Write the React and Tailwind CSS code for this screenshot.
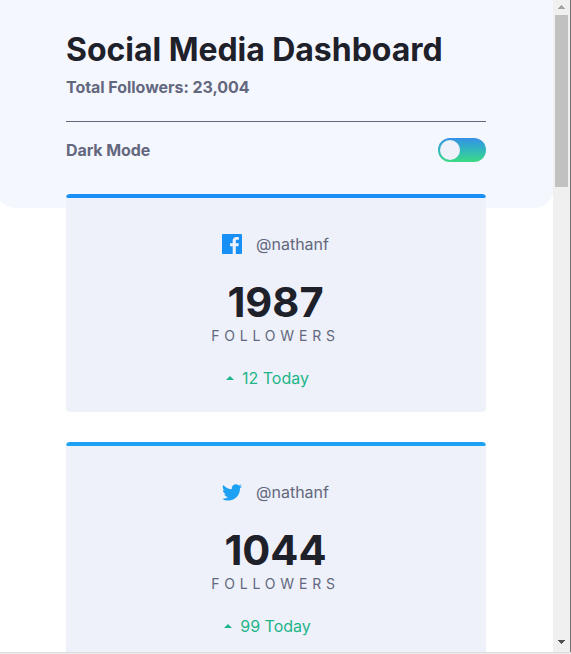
const FacebookIcon = () => (
  <svg width="20" height="20" viewBox="0 0 20 20" fill="#178FF5">
    <path d="M18.896 0H1.104C.494 0 0 .494 0 1.104v17.793C0 19.506.494 20 1.104 20h9.58v-7.745H8.076V9.237h2.606V7.01c0-2.583 1.578-3.99 3.883-3.99 1.104 0 2.052.082 2.329.119v2.7h-1.598c-1.254 0-1.496.597-1.496 1.47v1.928h2.989l-.39 3.018h-2.6V20h5.098c.608 0 1.102-.494 1.102-1.104V1.104C20 .494 19.506 0 18.896 0z" />
  </svg>
);

const TwitterIcon = () => (
  <svg width="20" height="17" viewBox="0 0 20 17" fill="#1DA1F2">
    <path d="M20 2.172a8.192 8.192 0 01-2.357.646 4.11 4.11 0 001.805-2.27 8.22 8.22 0 01-2.606.996A4.096 4.096 0 0013.847.248c-2.65 0-4.596 2.472-3.998 5.037A11.648 11.648 0 011.392.998a4.109 4.109 0 001.27 5.478 4.086 4.086 0 01-1.858-.513c-.045 1.9 1.318 3.679 3.291 4.075a4.113 4.113 0 01-1.853.07 4.106 4.106 0 003.833 2.849A8.25 8.25 0 010 14.658a11.616 11.616 0 006.29 1.843c7.618 0 11.922-6.434 11.663-12.205A8.354 8.354 0 0020 2.172z" />
  </svg>
);

function Card({ icon, bar, count, today }) {
  return (
    <section className="flex h-[218px] shrink-0 flex-col items-center overflow-hidden rounded-[4px] bg-[#eef1f9]">
      <div className={`h-1 w-full shrink-0 rounded-[4px] ${bar}`} />
      <div className="mt-[34px] flex h-6 items-center gap-[14px] pr-px text-base leading-6 text-[#63687e]">
        {icon}
        <span>@nathanf</span>
      </div>
      <div className="mt-[25px] h-[43px] pr-px text-[41.6px] leading-[42px] font-bold text-[#1e202a]">{count}</div>
      <div className="mt-[2px] h-5 pr-px text-sm leading-5 font-normal tracking-[4.8px] text-[#63687e]">FOLLOWERS</div>
      <div className="mt-[20px] flex h-6 items-center gap-2 pr-[17px] text-base leading-6 text-[#1eb589]">
        <svg width="8" height="4" viewBox="0 0 8 4" fill="#1eb589">
          <path fillRule="evenodd" d="M0 4l4-4 4 4z" />
        </svg>
        <span>{today} Today</span>
      </div>
    </section>
  );
}

function Scrollbar() {
  return (
    <div className="flex w-[18px] shrink-0 flex-col border-r border-[#707070] bg-[#f0f0f0] pl-[2px] pr-[2px]">
      <div className="flex h-[15px] justify-center pt-[5px]">
        <svg width="7" height="4" viewBox="0 0 7 4" fill="#a3a3a3" shapeRendering="crispEdges">
          <path d="M3 0h1v1h1v1h1v1h1v1H0V3h1V2h1V1h1z" />
        </svg>
      </div>
      <div className="h-[172px] w-[13px] bg-[#c1c1c1]" />
      <div className="mt-auto flex h-[12px] justify-center">
        <svg width="7" height="4" viewBox="0 0 7 4" fill="#505050" shapeRendering="crispEdges">
          <path d="M0 0h7v1H6v1H5v1H4v1H3V3H2V2H1V1H0z" />
        </svg>
      </div>
    </div>
  );
}

export default function App() {
  return (
    <div className="flex h-[654px] w-[571px] flex-col overflow-hidden bg-white font-[Inter,sans-serif]">
      <div className="flex h-[652px] shrink-0">
        <div className="flex h-[652px] w-[553px] flex-col overflow-hidden">
          <header className="-mr-px -ml-[4px] h-[208px] shrink-0 rounded-b-[20px] bg-[#f5f7ff] pr-[68px] pl-[70px] pt-[30px]">
            <h1 className="h-10 text-[32px] leading-10 font-bold tracking-[-0.04px] whitespace-nowrap text-[#1e202a]">Social Media Dashboard</h1>
            <p className="mt-[5px] h-6 text-base leading-6 font-bold tracking-[-0.04px] text-[#63687e]">Total Followers: 23,004</p>
            <div className="mt-[22px] h-px bg-[#63687e]" />
            <div className="mt-4 flex h-6 items-center justify-between">
              <span className="text-base leading-6 font-bold tracking-[-0.08px] text-[#63687e]">Dark Mode</span>
              <div className="flex h-6 w-12 items-center rounded-full bg-linear-to-b from-[#378fe6] to-[#3eda82] pl-[2px]">
                <div className="size-5 rounded-full bg-[#eef1f9]" />
              </div>
            </div>
          </header>
          <main className="-mt-[14px] flex flex-col gap-[30px] pr-[67px] pl-[66px]">
            <Card icon={<FacebookIcon />} bar="bg-[#178ff5]" count="1987" today="12" />
            <Card icon={<TwitterIcon />} bar="bg-[#1da1f2]" count="1044" today="99" />
          </main>
        </div>
        <Scrollbar />
      </div>
      <div className="h-[2px] shrink-0 border-t border-[#dcdcdc] bg-[#ececec]" />
    </div>
  );
}
